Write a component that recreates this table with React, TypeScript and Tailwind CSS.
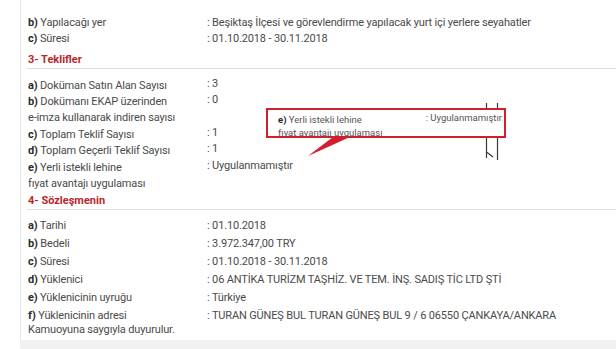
import React from 'react';

type Row = { key: string; label: React.ReactNode; value: string };

const Label: React.FC<{ k: string; children: React.ReactNode }> = ({ k, children }) => (
  <>
    <span className="font-bold text-[#2b2b2b]">{k}</span> {children}
  </>
);

const InfoRow: React.FC<{ row: Row; valueClass?: string }> = ({ row, valueClass }) => (
  <div className="flex leading-[16px]">
    <div className="w-[179px] shrink-0">{row.label}</div>
    <div className={`whitespace-nowrap ${valueClass ?? ''}`}>: {row.value}</div>
  </div>
);

const Heading: React.FC<{ children: React.ReactNode; className?: string }> = ({ children, className }) => (
  <div className={`border-b border-[#dedede] pl-[1px] text-[11px] font-bold leading-[17px] tracking-normal text-[#b8262c] ${className ?? ''}`}>
    {children}
  </div>
);

const topRows: Row[] = [
  {
    key: 'b',
    label: <Label k="b)">Yapılacağı yer</Label>,
    value: 'Beşiktaş İlçesi ve görevlendirme yapılacak yurt içi yerlere seyahatler',
  },
  { key: 'c', label: <Label k="c)">Süresi</Label>, value: '01.10.2018 - 30.11.2018' },
];

const offerRows: Row[] = [
  { key: 'a', label: <Label k="a)">Doküman Satın Alan Sayısı</Label>, value: '3' },
  {
    key: 'b',
    label: (
      <>
        <Label k="b)">Dokümanı EKAP üzerinden</Label>
        <br />
        e-imza kullanarak indiren sayısı
      </>
    ),
    value: '0',
  },
  { key: 'c', label: <Label k="c)">Toplam Teklif Sayısı</Label>, value: '1' },
  { key: 'd', label: <Label k="d)">Toplam Geçerli Teklif Sayısı</Label>, value: '1' },
  {
    key: 'e',
    label: (
      <>
        <Label k="e)">Yerli istekli lehine</Label>
        <br />
        fıyat avantajı uygulaması
      </>
    ),
    value: 'Uygulanmamıştır',
  },
];

const contractRows: Row[] = [
  { key: 'a', label: <Label k="a)">Tarihi</Label>, value: '01.10.2018' },
  { key: 'b', label: <Label k="b)">Bedeli</Label>, value: '3.972.347,00 TRY' },
  { key: 'c', label: <Label k="c)">Süresi</Label>, value: '01.10.2018 - 30.11.2018' },
  { key: 'd', label: <Label k="d)">Yüklenici</Label>, value: '06 ANTİKA TURİZM TAŞHİZ. VE TEM. İNŞ. SADIŞ TİC LTD ŞTİ' },
  { key: 'e', label: <Label k="e)">Yüklenicinin uyruğu</Label>, value: 'Türkiye' },
  {
    key: 'f',
    label: <Label k="f)">Yüklenicinin adresi</Label>,
    value: 'TURAN GÜNEŞ BUL TURAN GÜNEŞ BUL 9 / 6 06550 ÇANKAYA/ANKARA',
  },
];

export default function App() {
  return (
    <div className="relative h-[349px] w-[616px] overflow-hidden bg-white font-['Roboto','Liberation_Sans',sans-serif] text-[11px] tracking-[-0.15px] text-[#4a4a4a]">
      <div className="flex h-full flex-col">
        <div className="ml-[20px] h-[340px] shrink-0 border-l border-[#e4e4e4] pl-[6px] pt-[14.5px]">
          <div className="flex flex-col gap-[0.5px] pl-[1px]">
            {topRows.map((r) => (
              <InfoRow key={r.key} row={r} />
            ))}
          </div>

          <Heading className="mt-[3.5px]">3- Teklifler</Heading>
          <div className="mt-[9px] flex flex-col gap-[0.5px] pl-[1px]">
            {offerRows.map((r) => (
              <InfoRow key={r.key} row={r} valueClass="-mt-[2px]" />
            ))}
          </div>

          <Heading className="mt-0">4- Sözleşmenin</Heading>
          <div className="mt-[8px] flex flex-col gap-[2px] pl-[1px]">
            {contractRows.map((r) => (
              <InfoRow key={r.key} row={r} />
            ))}
          </div>
          <div className="pl-[1px] leading-[12px]">Kamuoyuna saygıyla duyurulur.</div>
        </div>
        <div className="ml-[20px] flex-1 bg-[#f1f1f1]" />
      </div>

      {/* bracket marks behind the callout */}
      <svg className="absolute left-0 top-0" width="616" height="349" viewBox="0 0 616 349">
        <path d="M486.5 103 V158 M486.5 152 L493 157 M497.5 103 V160" stroke="#3a3a3a" strokeWidth="1.2" fill="none" />
      </svg>

      {/* zoomed callout */}
      <div className="absolute left-[266px] top-[108px] flex h-[30px] w-[240px] justify-between border-2 border-[#d21f2d] bg-white pl-[10px] pr-[2px] pt-[3px] text-[9.5px] leading-[13px] tracking-normal text-[#555]">
        <div>
          <span className="font-bold text-[#2b2b2b]">e)</span> Yerli istekli lehine
          <br />
          fıyat avantajı uygulaması
        </div>
        <div className="-mt-[2px] whitespace-nowrap">: Uygulanmamıştır</div>
      </div>
      <svg className="absolute left-0 top-0" width="616" height="349" viewBox="0 0 616 349">
        <polygon points="333,137 350,137 308,156" fill="#d21f2d" />
      </svg>
    </div>
  );
}
